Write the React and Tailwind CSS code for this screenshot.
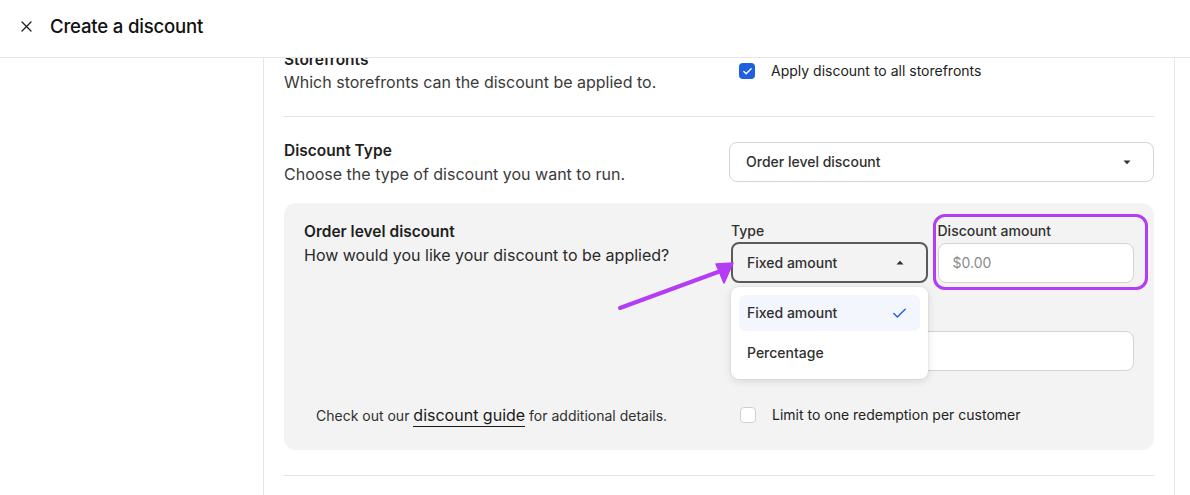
import React from "react";
import { Check } from "lucide-react";

const Caret = ({ up }) => (
  <svg width="8" height="5" viewBox="0 0 8 5" className="shrink-0">
    {up ? <path d="M0.5 4.5 L4 0.8 L7.5 4.5 Z" fill="#303030" /> : <path d="M0.5 0.5 L4 4.2 L7.5 0.5 Z" fill="#303030" />}
  </svg>
);

const App = () => {
  return (
    <div className="w-[1190px] h-[495px] overflow-hidden bg-white text-[#1f1f1f] flex flex-col" style={{ fontFamily: "Inter, 'Noto Sans', sans-serif" }}>
      {/* HEADER */}
      <header className="h-[58px] shrink-0 border-b border-[#e6e6e6] flex items-center pb-[5px]">
        <div className="w-[50px] flex justify-center pl-[2px]">
          <svg width="11" height="11" viewBox="0 0 11 11">
            <path d="M1 1 L10 10 M10 1 L1 10" stroke="#1f1f1f" strokeWidth="1.3" strokeLinecap="round" />
          </svg>
        </div>
        <h1 className="text-[18.6px] leading-6 font-medium tracking-[-0.2px] text-[#111]">Create a discount</h1>
      </header>

      <div className="flex flex-1 min-h-0">
        {/* Sidebar */}
        <aside className="w-[264px] shrink-0 border-r border-[#e6e6e6]" />

        {/* Main */}
        <main className="w-[911px] shrink-0 border-r border-[#e6e6e6] px-5 overflow-hidden">
          <div className="-mt-[9px]">
            {/* Storefronts */}
            <section className="flex border-b border-[#e3e3e3] pb-[23px]">
              <div className="w-[445px] shrink-0">
                <p className="text-[15.5px] leading-[22px] font-semibold">Storefronts</p>
                <p className="text-[16px] leading-[22px] text-[#3a3a3a]">Which storefronts can the discount be applied to.</p>
              </div>
              <div className="flex-1 pt-[14px] pl-[10px]">
                <label className="flex items-center gap-4 h-[16px]">
                  <span className="w-4 h-4 rounded-[4px] bg-[#1f5fe0] flex items-center justify-center">
                    <Check size={11} strokeWidth={3} color="white" />
                  </span>
                  <span className="text-sm text-[#222]">Apply discount to all storefronts</span>
                </label>
              </div>
            </section>

            {/* Discount Type */}
            <section className="flex pt-[23px]">
              <div className="w-[445px] shrink-0">
                <p className="text-[15.5px] leading-[22px] font-semibold">Discount Type</p>
                <p className="text-[16px] leading-[22px] text-[#3a3a3a] pt-[1px]">Choose the type of discount you want to run.</p>
              </div>
              <div className="flex-1 -mt-[20px] pt-[22px]">
                <div className="h-[40px] rounded-lg border border-[#d4d4d4] bg-white flex items-center justify-between pl-4 pr-[22px]">
                  <span className="text-sm font-medium text-[#303030]">Order level discount</span>
                  <Caret />
                </div>
              </div>
            </section>

            {/* Panel */}
            <div className="mt-[18px] h-[247px] rounded-xl bg-[#f3f3f3] px-5 pt-[18px] flex flex-col">
              <div className="flex">
                <div className="w-[427px] shrink-0">
                  <p className="text-[15.5px] leading-[22px] font-semibold">Order level discount</p>
                  <p className="text-[16px] leading-[22px] text-[#2a2a2a] pt-[1px]">How would you like your discount to be applied?</p>
                </div>
                <div className="flex-1 flex flex-col">
                  <div className="grid grid-cols-2 gap-[10px]">
                    <div className="relative">
                      <p className="text-sm leading-5 font-medium text-[#303030]">Type</p>
                      <div className="mt-[1px] h-[41px] rounded-lg border-2 border-[#5a5a5a] bg-[#f3f3f3] flex items-center justify-between pl-[14px] pr-[22px]">
                        <span className="text-sm font-medium text-[#303030]">Fixed amount</span>
                        <Caret up />
                      </div>
                      {/* dropdown */}
                      <div className="absolute z-10 left-0 right-0 top-[66px] bg-white rounded-lg p-2 shadow-[0_2px_8px_rgba(0,0,0,0.12),0_0_0_1px_rgba(0,0,0,0.03)]">
                        <div className="h-9 rounded-md bg-[#f3f6fc] flex items-center justify-between px-2">
                          <span className="text-sm font-medium text-[#303030]">Fixed amount</span>
                          <Check size={17} strokeWidth={2} color="#1f5fe0" className="mr-[4px]" />
                        </div>
                        <div className="mt-1 h-9 flex items-center px-2">
                          <span className="text-sm font-medium text-[#303030]">Percentage</span>
                        </div>
                      </div>
                    </div>
                    <div className="relative">
                      <div className="absolute -left-[5px] -top-[7px] -right-[14px] -bottom-[7px] rounded-xl border-[3px] border-[#b43cf2] pointer-events-none" />
                      <p className="text-sm leading-5 font-medium text-[#303030]">Discount amount</p>
                      <div className="mt-[2px] h-[40px] rounded-lg border border-[#d4d4d4] bg-white flex items-center pl-[14px]">
                        <span className="text-sm text-[#8a8a8a]">$0.00</span>
                      </div>
                    </div>
                  </div>
                  <div className="mt-[48px] h-[40px] rounded-lg border border-[#d4d4d4] bg-white" />
                </div>
              </div>

              <div className="flex mt-[32px] items-center">
                <div className="w-[427px] shrink-0 pl-3 text-[14px] text-[#303030]">
                  Check out our{" "}
                  <span className="text-[16px] text-[#1a1a1a] border-b border-[#1a1a1a] pb-[1px]">discount guide</span>{" "}
                  for additional details.
                </div>
                <label className="flex items-center gap-4 pl-[9px]">
                  <span className="w-4 h-4 rounded-[4px] bg-white border border-[#d0d0d0]" />
                  <span className="text-sm text-[#222]">Limit to one redemption per customer</span>
                </label>
              </div>
            </div>

            <div className="mt-[25px] border-t border-[#e3e3e3]" />
          </div>
        </main>
      </div>

      {/* Annotation arrow */}
      <svg className="absolute left-0 top-0 pointer-events-none" width="1190" height="495">
        <line x1="620" y1="308" x2="718" y2="272" stroke="#b43cf2" strokeWidth="4" strokeLinecap="round" />
        <path d="M733 263 L716 264 L724 283 Z" fill="#b43cf2" stroke="#b43cf2" strokeWidth="1.5" strokeLinejoin="round" />
      </svg>
    </div>
  );
};

export default App;
